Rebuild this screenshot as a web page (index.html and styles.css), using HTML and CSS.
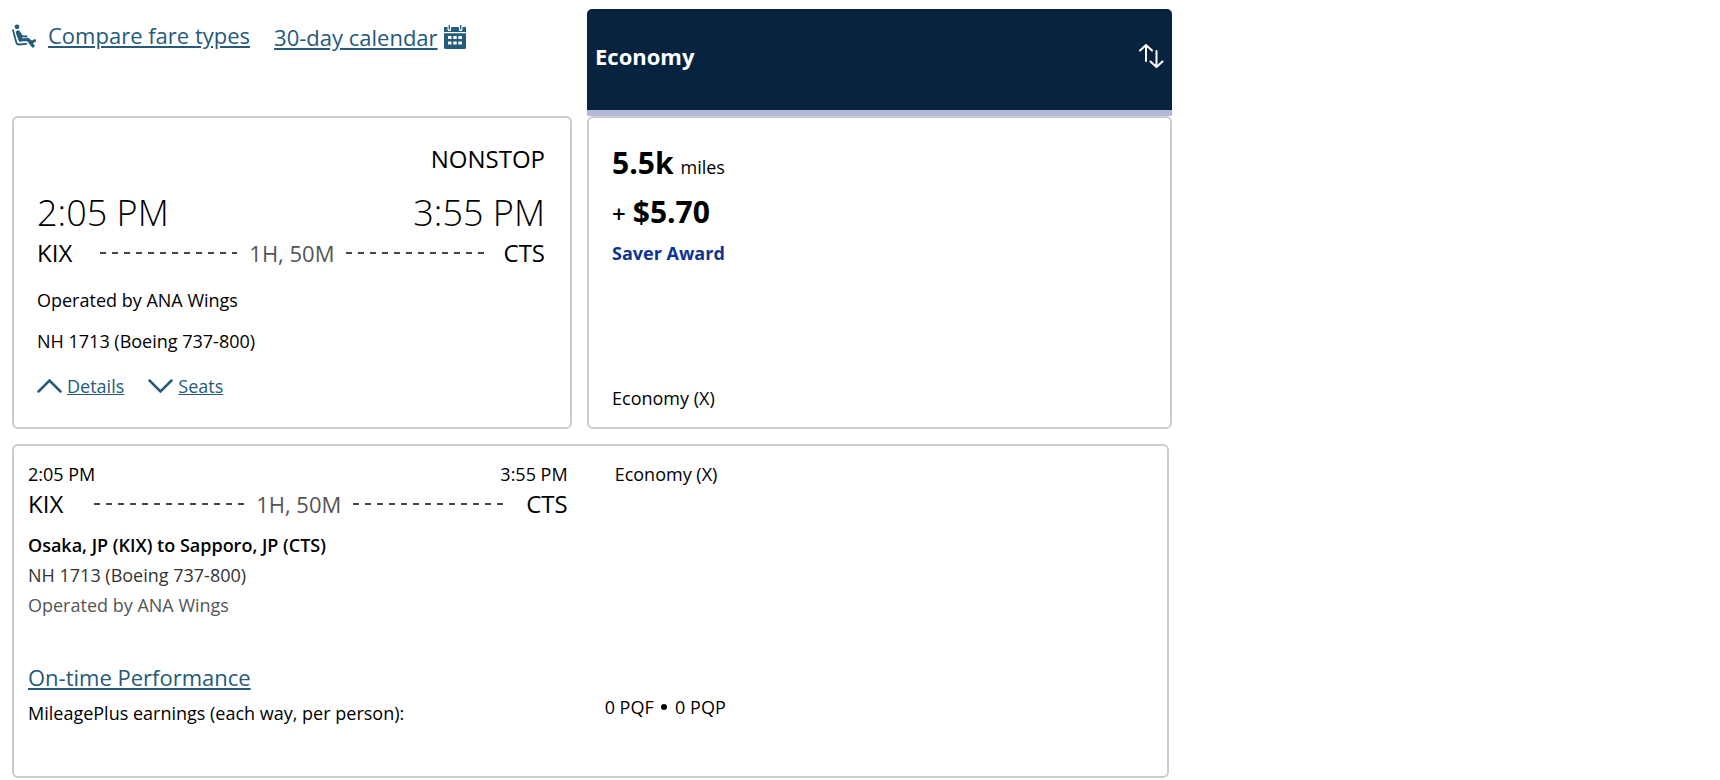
FILE: index.html
```
<!DOCTYPE html>
<html lang="en">
<head>
    <meta charset="utf-8">
    <title>Flight results KIX - CTS</title>
    <link rel="stylesheet" href="styles.css">
</head>
<body>
    <main class="results">
        <div class="top-row">
            <nav class="tools">
                <a class="tool-link" href="#fares">
                    <svg width="24" height="26" viewBox="0 0 24 26" fill="none" stroke="currentColor" stroke-linecap="round" stroke-linejoin="round" aria-hidden="true">
                        <circle cx="5" cy="4.800" r="2.400" fill="currentColor" stroke="none"/>
                        <path d="M1 8 4.300 20.500Q4.900 22.600 7 22.500L14.500 21.800" stroke-width="1.800"/>
                        <path d="M6 10.500 8.400 17.200" stroke-width="4.400"/>
                        <path d="M8.400 18 16 17.500 21 24" stroke-width="3.200"/>
                        <path d="M7 10.500 10 14.200 14.500 14.600" stroke-width="2"/>
                        <path d="M16 17.500 20 20 23 18.500" stroke-width="2.600"/>
                    </svg>
                    <span class="tool-text">Compare fare types</span>
                </a>
                <a class="tool-link calendar-link" href="#calendar">
                    <span class="tool-text">30-day calendar</span>
                    <svg width="22" height="24" viewBox="0 0 22 24" aria-hidden="true">
                        <path d="M0 2h3.500v2.500a1.800 1.800 0 0 0 3.600 0V2h7.800v2.500a1.800 1.800 0 0 0 3.600 0V2H22v5H0z" fill="currentColor"/>
                        <path d="M5.300 0v4.500M16.700 0v4.500" stroke="currentColor" stroke-width="1.300"/>
                        <path d="M0 8.200h22V22.500q0 1.500-1.500 1.500h-19Q0 24 0 22.500z" fill="currentColor"/>
                        <path d="M4 11h3.500v3H4zm5.200 0h3.500v3H9.200zm5.200 0h3.500v3h-3.500zM4 16.500h3.500v3H4zm5.200 0h3.500v3H9.200zm5.200 0h3.500v3h-3.500z" fill="#fff"/>
                    </svg>
                </a>
            </nav>
            <div class="cabin-header">
                <h2 class="cabin-name">Economy</h2>
                <button class="sort-button" type="button" aria-label="Sort by Economy">
                    <svg width="25" height="24" viewBox="0 0 25 24" fill="none" stroke="currentColor" stroke-width="2" stroke-linecap="round" stroke-linejoin="round">
                        <path d="M7 17V1.200M1 6.500l6-5.500L13 6.500"/>
                        <path d="M17.500 7v15.500M11.500 17.500l6 5.500 6-5.500"/>
                    </svg>
                </button>
            </div>
        </div>

        <div class="flight-row">
            <section class="card flight">
                <div class="stops">NONSTOP</div>
                <div class="times">
                    <span>2:05 PM</span>
                    <span>3:55 PM</span>
                </div>
                <div class="route">
                    <span class="airport">KIX</span>
                    <span class="dashes"></span>
                    <span class="duration">1H, 50M</span>
                    <span class="dashes"></span>
                    <span class="airport">CTS</span>
                </div>
                <p class="flight-info">Operated by ANA Wings</p>
                <p class="flight-info">NH 1713 (Boeing 737-800)</p>
                <div class="toggles">
                    <button class="toggle" type="button" aria-expanded="true">
                        <svg width="25" height="14" viewBox="0 0 25 14" aria-hidden="true"><path d="M1.500 12.500 12.500 1.500l11 11"/></svg>
                        <span>Details</span>
                    </button>
                    <button class="toggle" type="button" aria-expanded="false">
                        <svg width="25" height="14" viewBox="0 0 25 14" aria-hidden="true"><path d="M1.500 1.500 12.500 12.500l11-11"/></svg>
                        <span>Seats</span>
                    </button>
                </div>
            </section>

            <section class="card fare">
                <div class="price"><strong>5.5k</strong><span>miles</span></div>
                <div class="price"><span class="plus">+</span><strong>$5.70</strong></div>
                <div class="award">Saver Award</div>
                <div class="fare-class">Economy (X)</div>
            </section>
        </div>

        <section class="card details">
            <div class="segment">
                <div class="segment-times">
                    <span>2:05 PM</span>
                    <span>3:55 PM</span>
                </div>
                <div class="route">
                    <span class="airport">KIX</span>
                    <span class="dashes"></span>
                    <span class="duration">1H, 50M</span>
                    <span class="dashes"></span>
                    <span class="airport">CTS</span>
                </div>
                <h3 class="segment-title">Osaka, JP (KIX) to Sapporo, JP (CTS)</h3>
                <p class="aircraft">NH 1713 (Boeing 737-800)</p>
                <p class="operator">Operated by ANA Wings</p>
                <a class="performance" href="#performance">On-time Performance</a>
                <p class="earnings-label">MileagePlus earnings (each way, per person):</p>
            </div>
            <div class="segment-fare">
                <div class="segment-class">Economy (X)</div>
                <div class="earnings">0 PQF <span class="dot"></span> 0 PQP</div>
            </div>
        </section>
    </main>
</body>
</html>
```
FILE: styles.css
```
* { box-sizing: border-box; }
body {
    margin: 0;
    padding: 9px 12px 0;
    background: #fff;
    color: #000;
    font-family: "Open Sans", "Noto Sans", sans-serif;
    font-size: 18px;
    line-height: 24px;
}
p, h2, h3 { margin: 0; }
a { color: #245a7a; }
button {
    background: none;
    border: none;
    padding: 0;
    font: inherit;
    cursor: pointer;
}
svg { display: block; flex: none; }

.results { width: 68.4%; }
.top-row, .flight-row {
    display: grid;
    grid-template-columns: 560fr 585fr;
    column-gap: 15px;
}

/* links above the flight list */
.tools {
    display: flex;
    align-items: flex-start;
    gap: 24px;
    padding-top: 10px;
    font-size: 22px;
    line-height: 32px;
}
.tool-link {
    display: flex;
    align-items: center;
    gap: 12px;
    text-decoration: none;
}
.tool-text { text-decoration: underline; white-space: nowrap; }
.calendar-link { gap: 6px; padding-top: 2px; }

.cabin-header {
    display: flex;
    align-items: center;
    justify-content: space-between;
    height: 107px;
    padding: 0 8px 8px;
    background: #082340;
    border-bottom: 6px solid #b4b9dc;
    border-radius: 5px 5px 0 0;
    color: #fff;
}
.cabin-name { font-size: 22px; line-height: 32px; }
.sort-button { color: #fff; }

.card {
    border: 2px solid #ccc;
    border-radius: 6px;
}

/* flight summary */
.flight { padding: 25px 25px 27px 23px; }
.stops {
    text-align: right;
    font-size: 24px;
    line-height: 32px;
}
.times {
    display: flex;
    justify-content: space-between;
    margin: 15px 0 1px;
    font-size: 36px;
    font-weight: 300;
    line-height: 46px;
}
.route {
    display: flex;
    align-items: center;
    line-height: 32px;
}
.flight .route { margin-bottom: 19px; }
.airport { font-size: 24px; }
.airport:first-child { margin-right: 28px; }
.airport:last-child { margin-left: 20px; }
.duration {
    margin: 0 12px;
    color: #555;
    font-size: 22px;
}
.dashes {
    flex: 1;
    height: 2px;
    background: repeating-linear-gradient(to right, #444 0 6px, transparent 6px 12px);
}
.flight-info { margin-top: 17px; }
.toggles {
    display: flex;
    gap: 24px;
    margin-top: 19px;
}
.toggle {
    display: flex;
    align-items: center;
    gap: 5px;
    color: #245a7a;
    line-height: 28px;
}
.toggle span { text-decoration: underline; }
.toggle path {
    fill: none;
    stroke: currentColor;
    stroke-width: 2.5;
    stroke-linecap: round;
}

/* fare box */
.fare {
    display: flex;
    flex-direction: column;
    padding: 25px 23px 17px;
}
.price {
    display: flex;
    align-items: baseline;
    gap: 7px;
    margin-bottom: 9px;
}
.price strong { font-size: 30px; line-height: 40px; }
.plus { font-size: 24px; font-weight: 600; }
.award {
    color: #0c3590;
    font-weight: 700;
}
.fare-class { margin-top: auto; }

/* expanded details */
.details {
    display: grid;
    grid-template-columns: 533fr 592fr;
    margin: 15px 3px 0 0;
    padding: 16px 0 48px 14px;
}
.segment-times {
    display: flex;
    justify-content: space-between;
    margin-bottom: 2px;
}
.segment .airport:first-child { margin-right: 31px; }
.segment .airport:last-child { margin-left: 23px; }
.segment-title {
    margin-top: 10px;
    font-size: 18px;
    font-weight: 600;
    line-height: 30px;
}
.aircraft { color: #333; line-height: 30px; }
.operator { color: #555; line-height: 30px; }
.performance {
    display: inline-block;
    margin-top: 41px;
    font-size: 22px;
    line-height: 32px;
}
.earnings-label { margin-top: 5px; line-height: 30px; }
.segment-fare {
    display: flex;
    flex-direction: column;
    justify-content: space-between;
    padding: 0 37px 6px;
}
.segment-class { padding-left: 10px; }
.earnings { line-height: 30px; }
.dot {
    display: inline-block;
    width: 6px;
    height: 6px;
    margin: 0 3px 4px;
    border-radius: 50%;
    background: #000;
}
```
